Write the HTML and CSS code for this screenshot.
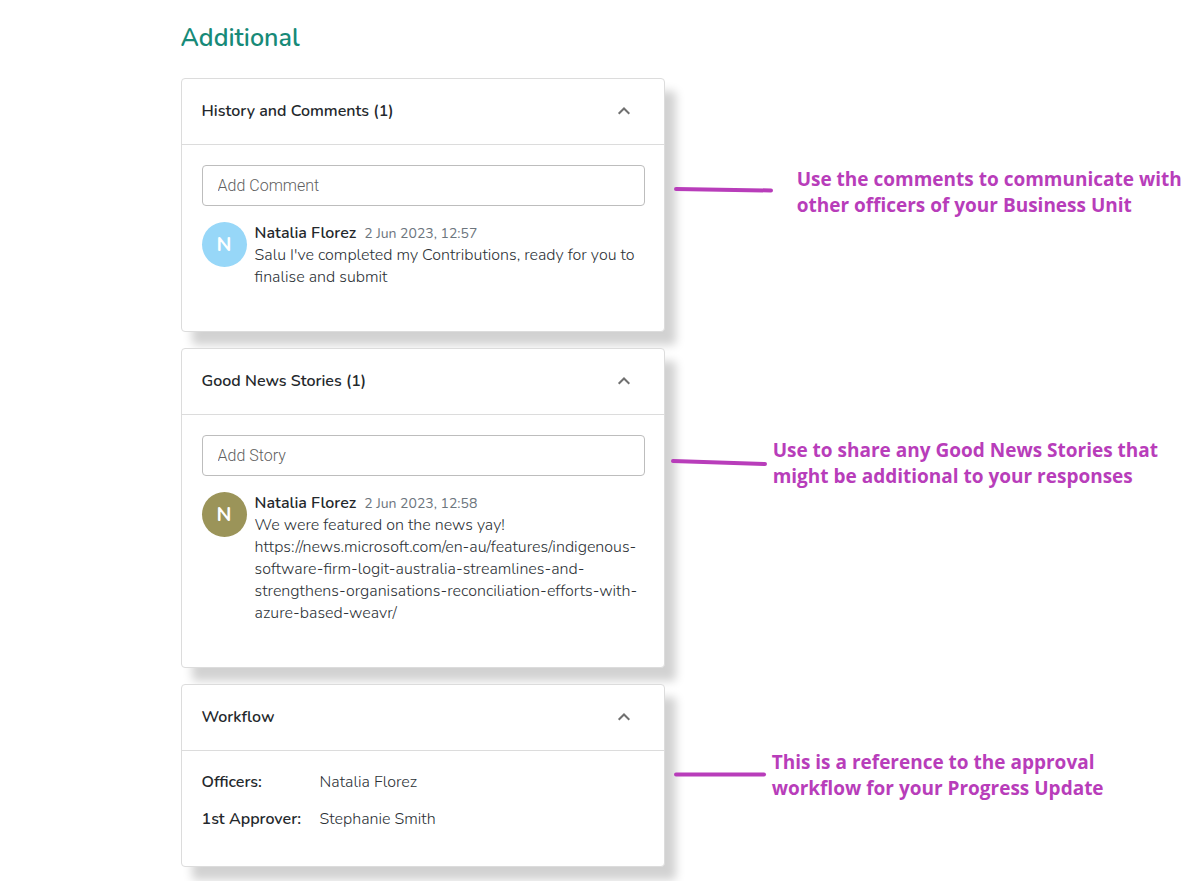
FILE: index.html
```html
<!DOCTYPE html>
<html lang="en">

<head>
    <meta charset="UTF-8">
    <meta name="viewport" content="width=device-width, initial-scale=1.0">
    <title>Additional</title>
    <link rel="stylesheet" href="styles.css">
</head>

<body>
    <main class="wrapper">
        <h1 class="title">Additional</h1>

        <div class="row">
            <section class="card">
                <div class="card-header">
                    <h2>History and Comments (1)</h2>
                    <button type="button" class="toggle" aria-label="Collapse History and Comments">
                        <svg width="14" height="10" viewBox="0 0 14 10"><path d="M1.7 7.8L7 2.5l5.3 5.3" /></svg>
                    </button>
                </div>
                <div class="card-body">
                    <input type="text" class="field" placeholder="Add Comment" aria-label="Add Comment">
                    <div class="comment">
                        <div class="avatar blue">N</div>
                        <div class="comment-text">
                            <div><b>Natalia Florez</b><span class="date">2 Jun 2023, 12:57</span></div>
                            <p>Salu I've completed my Contributions, ready for you to<br>finalise and submit</p>
                        </div>
                    </div>
                </div>
            </section>
            <div class="note note-comments">
                <svg width="100" height="10" viewBox="0 0 100 10"><path d="M2 2l95 1.5" /></svg>
                <p>Use the comments to communicate with<br>other officers of your Business Unit</p>
            </div>
        </div>

        <div class="row">
            <section class="card">
                <div class="card-header">
                    <h2>Good News Stories (1)</h2>
                    <button type="button" class="toggle" aria-label="Collapse Good News Stories">
                        <svg width="14" height="10" viewBox="0 0 14 10"><path d="M1.7 7.8L7 2.5l5.3 5.3" /></svg>
                    </button>
                </div>
                <div class="card-body">
                    <input type="text" class="field" placeholder="Add Story" aria-label="Add Story">
                    <div class="comment">
                        <div class="avatar olive">N</div>
                        <div class="comment-text">
                            <div><b>Natalia Florez</b><span class="date">2 Jun 2023, 12:58</span></div>
                            <p>We were featured on the news yay!<br>https://news.microsoft.com/en-au/features/indigenous-<br>software-firm-logit-australia-streamlines-and-<br>strengthens-organisations-reconciliation-efforts-with-<br>azure-based-weavr/</p>
                        </div>
                    </div>
                </div>
            </section>
            <div class="note note-stories">
                <svg width="98" height="8" viewBox="0 0 98 8"><path d="M2 2l92 3" /></svg>
                <p>Use to share any Good News Stories that<br>might be additional to your responses</p>
            </div>
        </div>

        <div class="row">
            <section class="card">
                <div class="card-header">
                    <h2>Workflow</h2>
                    <button type="button" class="toggle" aria-label="Collapse Workflow">
                        <svg width="14" height="10" viewBox="0 0 14 10"><path d="M1.7 7.8L7 2.5l5.3 5.3" /></svg>
                    </button>
                </div>
                <dl class="card-body workflow">
                    <dt>Officers:</dt>
                    <dd>Natalia Florez</dd>
                    <dt>1st Approver:</dt>
                    <dd>Stephanie Smith</dd>
                </dl>
            </section>
            <div class="note note-workflow">
                <svg width="93" height="6" viewBox="0 0 93 6"><path d="M2 2.5h88" /></svg>
                <p>This is a reference to the approval<br>workflow for your Progress Update</p>
            </div>
        </div>
    </main>
</body>

</html>
```
FILE: styles.css
```css
* {
    padding: 0;
    margin: 0;
    box-sizing: border-box;
}

body {
    background: #fff;
    color: #2c3136;
    font-family: Nunito, "Open Sans", sans-serif;
    font-size: 16px;
    font-weight: 300;
    line-height: 22px;
}

.wrapper {
    padding: 22px 0 24px 15%;
}

.title {
    margin-bottom: 24px;
    color: #178a78;
    font-size: 25px;
    font-weight: 600;
    line-height: 32px;
}

.row {
    display: flex;
    align-items: flex-start;
    margin-bottom: 16px;
}

.card {
    flex: 0 0 47.3%;
    background: #fff;
    border: 1px solid #dcdcdc;
    border-radius: 4px;
    box-shadow: 11px 13px 10px rgba(0, 0, 0, 0.18);
}

.card-header {
    display: flex;
    align-items: center;
    justify-content: space-between;
    padding: 20px 28px 21px 20px;
    border-bottom: 1px solid #dcdcdc;
}

.card-header h2 {
    color: #24282c;
    font-size: 16px;
    font-weight: 600;
    line-height: 24px;
}

.toggle {
    display: flex;
    align-items: center;
    justify-content: center;
    width: 24px;
    height: 24px;
    border: 0;
    background: none;
    cursor: pointer;
}

.toggle path {
    fill: none;
    stroke: #707070;
    stroke-width: 2;
}

.card-body {
    padding: 20px 19px 43px 20px;
}

.field {
    display: block;
    width: 100%;
    height: 41px;
    padding: 0 15px;
    border: 1px solid #bdbdbd;
    border-radius: 4px;
    color: #24282c;
    font-family: Roboto, "Liberation Sans", sans-serif;
    font-size: 16px;
    font-weight: 300;
}

.field::placeholder {
    color: #5f5f5f;
}

.comment {
    display: flex;
    gap: 8px;
    margin-top: 16px;
}

.avatar {
    flex: none;
    width: 45px;
    height: 45px;
    border-radius: 50%;
    color: #fff;
    font-size: 20px;
    font-weight: 700;
    line-height: 45px;
    text-align: center;
}

.blue {
    background: #97d7f8;
}

.olive {
    background: #9b9459;
}

.comment-text {
    white-space: nowrap;
}

.comment b {
    color: #24282c;
    font-weight: 600;
}

.date {
    margin-left: 8px;
    color: #6c757d;
    font-size: 14px;
    font-weight: 400;
    line-height: 16px;
}

.workflow {
    display: grid;
    grid-template-columns: 103px 1fr;
    gap: 15px;
    padding-bottom: 36px;
}

.workflow dt {
    color: #24282c;
    font-weight: 600;
    white-space: nowrap;
}

.note {
    display: flex;
    align-items: center;
    position: relative;
    color: #b83dba;
    font-family: "Open Sans", "Noto Sans", sans-serif;
    font-size: 19px;
    font-weight: 700;
    line-height: 26px;
    white-space: nowrap;
}

.note svg {
    flex: none;
}

.note path {
    fill: none;
    stroke: #b83dba;
    stroke-width: 4;
    stroke-linecap: round;
}

.note-comments {
    gap: 23px;
    margin: 88px 0 0 9px;
}

.note-stories {
    gap: 4px;
    margin: 89px 0 0 6px;
}

.note-workflow {
    gap: 5px;
    margin: 65px 0 0 9px;
}
```
